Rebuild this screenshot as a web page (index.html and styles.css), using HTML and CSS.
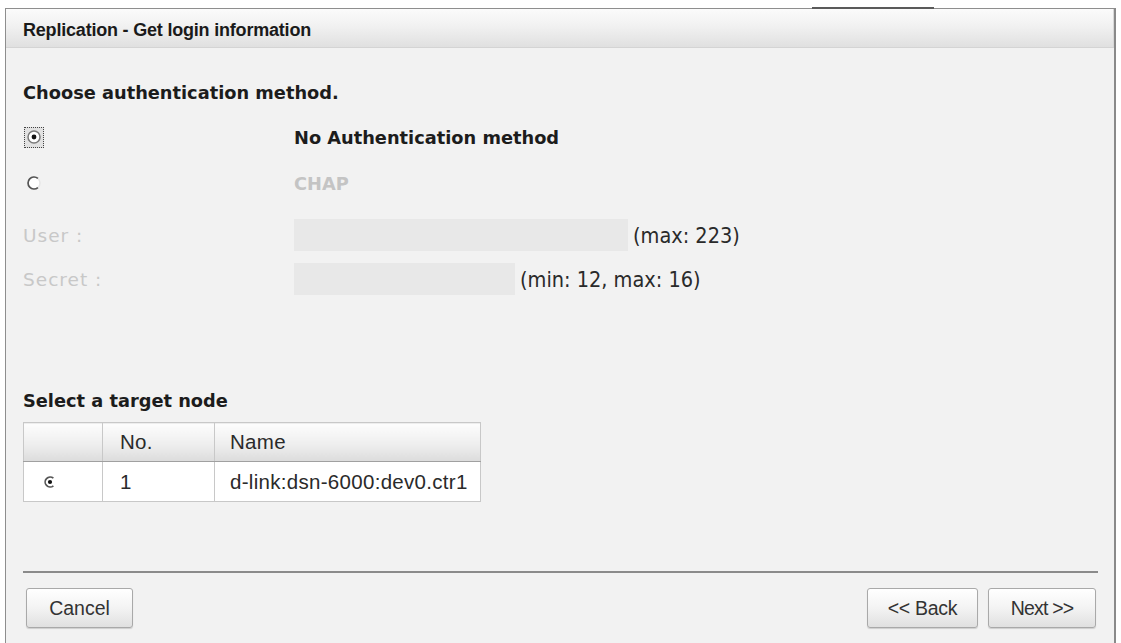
FILE: index.html
```html
<!DOCTYPE html>
<html>
<head>
<meta charset="utf-8">
<link rel="stylesheet" href="styles.css">
</head>
<body>
<div class="tabmark"></div>
<div class="panel">
  <div class="header">Replication - Get login information</div>
  <div class="content">
    <div class="section-title">Choose authentication method.</div>
    <div class="auth-rows">
      <div class="auth-row">
        <span class="radio-cell focus">
          <svg width="16" height="16" viewBox="0 0 16 16"><circle cx="8" cy="8" r="6" fill="#fff" stroke="#7a7a7a" stroke-width="1.5"/><circle cx="8" cy="8" r="2.4" fill="#111"/></svg>
        </span>
        <span class="auth-label">No Authentication method</span>
      </div>
      <div class="auth-row">
        <span class="radio-cell">
          <svg width="16" height="16" viewBox="0 0 16 16"><circle cx="8" cy="8" r="6" fill="#fff" stroke="#e6e6e6" stroke-width="1.5"/><path d="M11.9 3.4 A6 6 0 1 0 11.9 12.6" fill="none" stroke="#555" stroke-width="1.7"/></svg>
        </span>
        <span class="auth-label disabled">CHAP</span>
      </div>
    </div>
    <div class="field-rows">
      <div class="field-row">
        <span class="field-label">User :</span>
        <span class="input user-input"></span>
        <span class="hint">(max: 223)</span>
      </div>
      <div class="field-row">
        <span class="field-label">Secret :</span>
        <span class="input secret-input"></span>
        <span class="hint">(min: 12, max: 16)</span>
      </div>
    </div>

    <div class="section-title target-title">Select a target node</div>
    <table class="nodes">
      <thead>
        <tr><th class="c-sel"></th><th class="c-no">No.</th><th class="c-name">Name</th></tr>
      </thead>
      <tbody>
        <tr>
          <td class="c-sel"><svg width="14" height="14" viewBox="0 0 14 14"><path d="M10.4 3.2 A5 5 0 1 0 10.4 10.8" fill="none" stroke="#555" stroke-width="1.7"/><circle cx="7" cy="7" r="2.1" fill="#111"/></svg></td>
          <td class="c-no">1</td>
          <td class="c-name">d-link:dsn-6000:dev0.ctr1</td>
        </tr>
      </tbody>
    </table>
  </div>
  <div class="footer">
    <div class="separator"></div>
    <div class="buttons">
      <button class="btn cancel">Cancel</button>
      <div class="right-buttons">
        <button class="btn back">&lt;&lt; Back</button>
        <button class="btn next">Next &gt;&gt;</button>
      </div>
    </div>
  </div>
</div>
</body>
</html>
```
FILE: styles.css
```css
html, body {
  margin: 0;
  padding: 0;
  background: #ffffff;
  height: 643px;
  overflow: hidden;
}
body {
  padding: 8px 0 0 5px;
  box-sizing: border-box;
  position: relative;
}
.tabmark {
  position: absolute;
  left: 812px;
  top: 7px;
  width: 122px;
  height: 2px;
  background: #5a5a5a;
}
.panel {
  width: 1111px;
  height: 650px;
  box-sizing: border-box;
  border: 1px solid #8e8e8e;
  border-right: 2px solid #8a8a8a;
  background: #f2f2f2;
  display: flex;
  flex-direction: column;
}
.header {
  height: 39px;
  box-sizing: border-box;
  border-bottom: 1px solid #d4d4d4;
  background: linear-gradient(#fbfbfb, #f1f1f1 45%, #e0e0e0);
  box-shadow: inset -7px 0 0 -6px #d8d8d8;
  font-family: "Liberation Sans", Arial, sans-serif;
  font-weight: bold;
  font-size: 18px;
  line-height: 20px;
  letter-spacing: -0.2px;
  color: #1a1a1a;
  padding: 11px 0 0 17px;
}
.content {
  padding: 0 0 0 17px;
}
.section-title {
  font-family: "DejaVu Sans", sans-serif;
  font-weight: bold;
  font-size: 17.8px;
  line-height: 22px;
  height: 22px;
  color: #1c1c1c;
  margin-top: 34px;
}
.auth-rows {
  margin-top: 10px;
}
.auth-row {
  display: grid;
  grid-template-columns: 271px auto;
  align-items: center;
  height: 46px;
}
.radio-cell {
  display: flex;
  align-items: center;
  justify-content: center;
  width: 20px;
  height: 21px;
  box-sizing: border-box;
  margin-left: 1px;
}
.radio-cell.focus {
  border: 1px dotted #444;
  background: #e2e2e2;
}
.radio-cell svg { display: block; }
.auth-label {
  font-family: "DejaVu Sans", sans-serif;
  font-weight: bold;
  font-size: 17.8px;
  color: #1c1c1c;
}
.auth-label.disabled {
  color: #c4c4c4;
}
.field-rows {
  margin-top: 7px;
}
.field-row {
  display: grid;
  grid-template-columns: 271px auto auto;
  justify-content: start;
  align-items: center;
  height: 44px;
}
.field-label {
  font-family: "DejaVu Sans", sans-serif;
  font-size: 18.5px;
  letter-spacing: 1px;
  color: #c8c8c8;
}
.input {
  display: block;
  height: 32px;
  background: #e8e8e8;
}
.user-input { width: 334px; }
.secret-input { width: 221px; }
.hint {
  font-family: "DejaVu Sans Condensed", "DejaVu Sans", sans-serif;
  font-size: 21.5px;
  color: #2a2a2a;
  padding-left: 5px;
}
.target-title {
  margin-top: 89px;
}
.nodes {
  margin-top: 10px;
  border-collapse: collapse;
  width: 458px;
  font-family: "Liberation Sans", Arial, sans-serif;
  font-size: 20.5px;
  letter-spacing: 0.3px;
  color: #2a2a2a;
  border: 1px solid #9a9a9a;
}
.nodes th, .nodes td {
  border: 1px solid #c8c8c8;
  text-align: left;
  font-weight: normal;
  padding: 0 0 0 15px;
}
.nodes thead th {
  height: 38px;
  background: linear-gradient(#fdfdfd, #eeeeee 55%, #dcdcdc);
  border-bottom: 1px solid #a0a0a0;
}
.nodes tbody td {
  height: 39px;
  background: #ffffff;
}
.nodes .c-sel { width: 59px; padding-left: 19px; }
.nodes .c-no { width: 94px; padding-left: 17px; }
.nodes td svg { display: block; }
.footer {
  margin-top: auto;
  padding: 0 16px 0 17px;
  height: 86px;
}
.separator {
  height: 2px;
  background: #8b8b8b;
}
.buttons {
  display: flex;
  justify-content: space-between;
  margin-top: 15px;
  padding-left: 3px;
  padding-right: 2px;
}
.right-buttons {
  display: flex;
  gap: 10px;
}
.btn {
  height: 40px;
  box-sizing: border-box;
  border: 1px solid #a9a9a9;
  border-radius: 3px;
  background: linear-gradient(#ffffff, #f3f3f3 50%, #e0e0e0);
  font-family: "Liberation Sans", Arial, sans-serif;
  font-size: 19.5px;
  color: #333333;
  padding: 0;
  box-shadow: 0 1px 1px rgba(0,0,0,0.15);
}
.cancel { width: 107px; }
.back { width: 111px; letter-spacing: -0.3px; }
.next { width: 108px; letter-spacing: -0.8px; }
```
